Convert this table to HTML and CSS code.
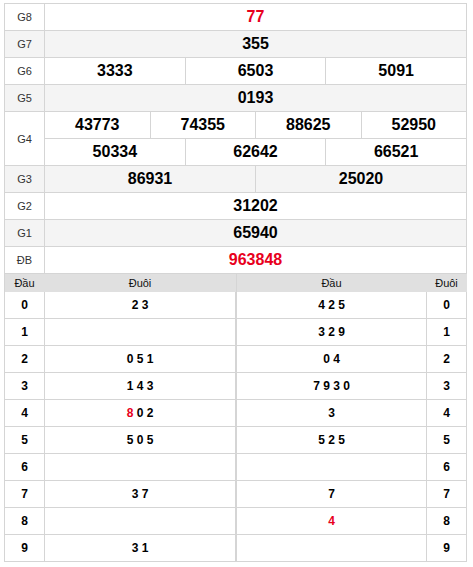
FILE: index.html
```html
<!DOCTYPE html>
<html lang="vi">
<head>
<meta charset="utf-8">
<title>KQXS</title>
<link rel="stylesheet" href="styles.css">
</head>
<body>
<div class="wrap">
  <div class="kq">
    <div class="lbl">G8</div><div class="num s12 red">77</div>
    <div class="lbl alt">G7</div><div class="num s12 alt">355</div>
    <div class="lbl">G6</div><div class="num s4">3333</div><div class="num s4">6503</div><div class="num s4">5091</div>
    <div class="lbl alt">G5</div><div class="num s12 alt">0193</div>
    <div class="lbl r2">G4</div><div class="num s3">43773</div><div class="num s3">74355</div><div class="num s3">88625</div><div class="num s3">52950</div>
    <div class="num s4">50334</div><div class="num s4">62642</div><div class="num s4">66521</div>
    <div class="lbl alt">G3</div><div class="num s6 alt">86931</div><div class="num s6 alt">25020</div>
    <div class="lbl">G2</div><div class="num s12">31202</div>
    <div class="lbl alt">G1</div><div class="num s12 alt">65940</div>
    <div class="lbl">ĐB</div><div class="num s12 red">963848</div>
  </div>
  <div class="loto">
    <div class="lt lt-left">
      <div class="hd">Đầu</div><div class="hd">Đuôi</div>
      <div class="k">0</div><div class="v">2 3</div>
      <div class="k">1</div><div class="v"></div>
      <div class="k">2</div><div class="v">0 5 1</div>
      <div class="k">3</div><div class="v">1 4 3</div>
      <div class="k">4</div><div class="v"><span class="red">8</span> 0 2</div>
      <div class="k">5</div><div class="v">5 0 5</div>
      <div class="k">6</div><div class="v"></div>
      <div class="k">7</div><div class="v">3 7</div>
      <div class="k">8</div><div class="v"></div>
      <div class="k">9</div><div class="v">3 1</div>
    </div>
    <div class="lt lt-right">
      <div class="hd">Đầu</div><div class="hd">Đuôi</div>
      <div class="v">4 2 5</div><div class="k">0</div>
      <div class="v">3 2 9</div><div class="k">1</div>
      <div class="v">0 4</div><div class="k">2</div>
      <div class="v">7 9 3 0</div><div class="k">3</div>
      <div class="v">3</div><div class="k">4</div>
      <div class="v">5 2 5</div><div class="k">5</div>
      <div class="v"></div><div class="k">6</div>
      <div class="v">7</div><div class="k">7</div>
      <div class="v"><span class="red">4</span></div><div class="k">8</div>
      <div class="v"></div><div class="k">9</div>
    </div>
  </div>
</div>
</body>
</html>
```

FILE: styles.css
```css
* { box-sizing: border-box; }
html, body { margin: 0; padding: 0; background: #fff; }
body {
  font-family: "Liberation Sans", Arial, sans-serif;
  color: #000;
}
.wrap {
  width: 467px;
  padding: 3px 0 0 4px;
}
.kq {
  display: grid;
  grid-template-columns: 40px repeat(12, 1fr);
  grid-auto-rows: 27px;
  border-left: 1px solid #d5d5d5;
  border-top: 1px solid #d5d5d5;
}
.kq > div {
  border-right: 1px solid #d5d5d5;
  border-bottom: 1px solid #d5d5d5;
  display: flex;
  align-items: center;
  justify-content: center;
}
.lbl {
  font-size: 11px;
  color: #333;
}
.r2 { grid-row: span 2; }
.num {
  font-size: 16px;
  font-weight: bold;
}
.s12 { grid-column: span 12; }
.s6 { grid-column: span 6; }
.s4 { grid-column: span 4; }
.s3 { grid-column: span 3; }
.alt { background: #f4f4f4; }
.red { color: #e8001c; }

.loto {
  display: flex;
}
.lt {
  display: grid;
  grid-template-rows: 18px;
  grid-auto-rows: 27px;
  border-left: 1px solid #d5d5d5;
}
.lt-left { grid-template-columns: 40px 191px; }
.lt-right { grid-template-columns: 190px 40px; }
.lt > div {
  border-right: 1px solid #d5d5d5;
  border-bottom: 1px solid #d5d5d5;
  display: flex;
  align-items: center;
  justify-content: center;
  font-size: 12px;
  font-weight: bold;
}
.lt > .hd {
  height: 18px;
  background: #e0e0e0;
  border-color: #e0e0e0;
  font-size: 11px;
  font-weight: normal;
  color: #111;
  align-self: start;
}
.v { white-space: pre; }
```
